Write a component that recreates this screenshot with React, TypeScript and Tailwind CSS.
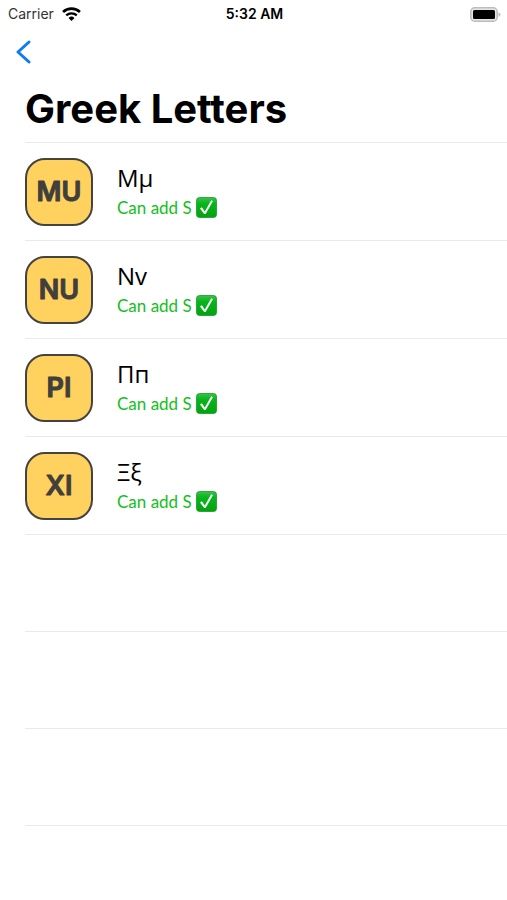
import React from 'react';

interface GreekLetter {
  tile: string;
  glyphs: string;
  note: string;
}

const letters: GreekLetter[] = [
  { tile: 'MU', glyphs: 'Mµ', note: 'Can add S' },
  { tile: 'NU', glyphs: 'Nv', note: 'Can add S' },
  { tile: 'PI', glyphs: 'Пп', note: 'Can add S' },
  { tile: 'XI', glyphs: 'Ξξ', note: 'Can add S' },
];

const emptyRows = [0, 1, 2];

const WifiIcon: React.FC = () => (
  <svg viewBox="0 0 18 14" className="w-[19px] h-[15px]" aria-hidden="true">
    <path d="M1 4.600a11.6 11.6 0 0 1 16 0" fill="none" stroke="#000" strokeWidth="2.5" />
    <path d="M4 7.900a7.2 7.2 0 0 1 10 0" fill="none" stroke="#000" strokeWidth="2.2" />
    <path d="M9 13.2 6.2 10.300a4 4 0 0 1 5.6 0Z" fill="#000" />
  </svg>
);

const BatteryIcon: React.FC = () => (
  <svg viewBox="0 0 31 15" className="w-[31px] h-[15px]" aria-hidden="true">
    <rect x="0.8" y="0.8" width="26.4" height="13.4" rx="4" fill="#e6e6e6" stroke="#bdbdbd" strokeWidth="1.6" />
    <rect x="3" y="3" width="22" height="9" rx="1.5" fill="#000" />
    <path d="M28.5 5.2c1.200.4 2 1.300 2 2.300s-.8 1.900-2 2.300Z" fill="#bdbdbd" />
  </svg>
);

const CheckBadge: React.FC = () => (
  <svg viewBox="0 0 21 21" className="w-[21px] h-[21px]" aria-hidden="true">
    <defs>
      <linearGradient id="badge" x1="0" y1="0" x2="0" y2="1">
        <stop offset="0" stopColor="#3cc24c" />
        <stop offset="0.3" stopColor="#08b51c" />
        <stop offset="1" stopColor="#02a30f" />
      </linearGradient>
    </defs>
    <rect x="0.5" y="0.5" width="20" height="20" rx="3" fill="url(#badge)" stroke="#159a24" strokeWidth="0.8" />
    <path d="M4 11.400 5.900 10.200l2.900 4.200L15.200 3.300l1.700.9L9.600 17.100H8.200Z" fill="#fff" />
  </svg>
);

const LetterTile: React.FC<{ name: string }> = ({ name }) => (
  <div className="h-[68px] w-[68px] shrink-0 rounded-[20px] border-2 border-[#45433f] bg-[#ffd260]">
    <svg viewBox="0 0 64 64" className="h-16 w-16">
      <text
        x="32"
        y="41"
        textAnchor="middle"
        fill="#413f3b"
        stroke="#413f3b"
        strokeWidth="1"
        strokeLinejoin="round"
        className="font-[Inter,sans-serif] text-[27px] font-semibold"
      >
        {name}
      </text>
    </svg>
  </div>
);

const LetterRow: React.FC<{ letter: GreekLetter }> = ({ letter }) => (
  <li className="flex h-[98px] items-center gap-6 border-b border-[#e9e9ea]">
    <LetterTile name={letter.tile} />
    <div>
      <h2 className="font-['Open_Sans',sans-serif] text-[24px] leading-8 text-black">{letter.glyphs}</h2>
      <p className="flex items-center gap-1 font-[Lato,sans-serif] text-[17px] leading-7 text-[#12c01b]">
        {letter.note}
        <CheckBadge />
      </p>
    </div>
  </li>
);

const App: React.FC = () => {
  return (
    <div className="min-h-screen bg-white font-[Inter,sans-serif] text-black">
      {/* Status bar */}
      <div className="grid h-7 grid-cols-3 items-center pl-2 pr-1.5 text-[14px] leading-5">
        <div className="flex items-center gap-2 text-[#333]">
          <span>Carrier</span>
          <WifiIcon />
        </div>
        <span className="text-center font-semibold">5:32 AM</span>
        <div className="flex justify-end">
          <BatteryIcon />
        </div>
      </div>

      {/* Navigation */}
      <nav className="flex h-12 items-center pl-4">
        <button type="button" aria-label="Back">
          <svg viewBox="0 0 16 24" className="h-6 w-4" fill="none" aria-hidden="true">
            <path d="M13 2 2 12l11 10" stroke="#0a7cf5" strokeWidth="3" strokeLinecap="round" strokeLinejoin="round" />
          </svg>
        </button>
      </nav>

      <h1 className="h-[66px] pl-[25px] pt-[9px] text-[40px] font-bold leading-[48px]">Greek Letters</h1>

      {/* Letters */}
      <ul className="ml-[25px] border-t border-[#e9e9ea]">
        {letters.map((letter) => (
          <LetterRow key={letter.tile} letter={letter} />
        ))}
        {emptyRows.map((row) => (
          <li key={row} aria-hidden="true" className="h-[97px] border-b border-[#e9e9ea]" />
        ))}
      </ul>
    </div>
  );
};

export default App;
